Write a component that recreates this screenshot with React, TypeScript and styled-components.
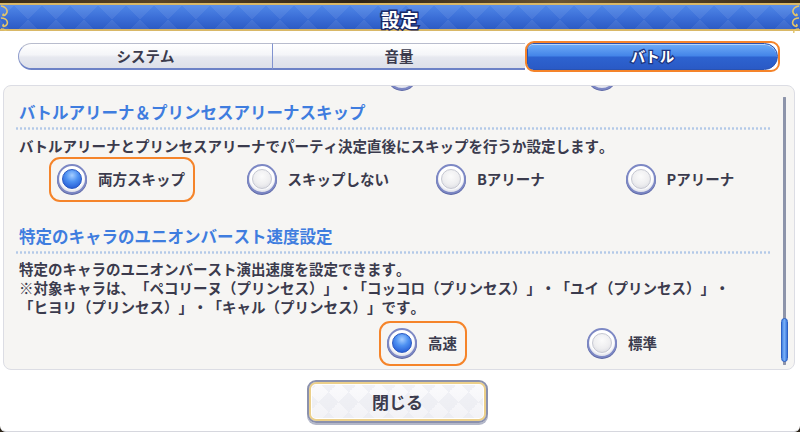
import React from "react";
import styled, { createGlobalStyle } from "styled-components";

const FONT = `"Noto Sans CJK JP", "Noto Sans", sans-serif`;

const Global = createGlobalStyle`
  html, body { margin: 0; padding: 0; width: 800px; height: 432px; overflow: hidden; background: #2b2418; }
  * { box-sizing: border-box; text-spacing-trim: space-all; font-kerning: none; }
  #root { width: 800px; height: 432px; }
`;

const Screen = styled.div`
  width: 800px;
  height: 432px;
  display: flex;
  flex-direction: column;
  font-family: ${FONT};
  color: #3b3b4d;
`;

const TopStrip = styled.div`
  height: 3px;
  flex-shrink: 0;
  background: linear-gradient(90deg, #3a2c18, #5a4424 20%, #2f2414 45%, #6a5430 70%, #3a2c18);
`;

const Header = styled.div`
  height: 28px;
  flex-shrink: 0;
  border-top: 2px solid #d9b867;
  border-bottom: 2px solid #d9b867;
  background:
    linear-gradient(45deg, rgba(255,255,255,0.07) 25%, transparent 25%, transparent 75%, rgba(255,255,255,0.07) 75%),
    linear-gradient(-45deg, rgba(255,255,255,0.07) 25%, transparent 25%, transparent 75%, rgba(255,255,255,0.07) 75%),
    linear-gradient(180deg, #5088e8 0%, #3a6dd6 55%, #2c5bc4 100%);
  background-size: 28px 28px, 28px 28px, 100% 100%;
  display: grid;
  grid-template-columns: 1fr auto 1fr;
  align-items: center;
`;

const Ornament = styled.svg<{ $side: "left" | "right" }>`
  justify-self: ${(p) => (p.$side === "left" ? "start" : "end")};
  transform: ${(p) => (p.$side === "right" ? "scaleX(-1)" : "none")};
  display: block;
`;

const Title = styled.div`
  font-size: 18.5px;
  font-weight: 700;
  line-height: 24px;
  color: #ffffff;
  -webkit-text-stroke: 3px #1b2a66;
  paint-order: stroke fill;
  letter-spacing: 0.5px;
`;

const Panel = styled.div`
  flex: 1;
  background: #ffffff;
  display: flex;
  flex-direction: column;
  border-radius: 0 0 6px 6px;
  border-bottom: 1px solid #d6d7de;
`;

const Tabs = styled.div`
  margin: 12px 22px 0 18px;
  height: 27px;
  display: grid;
  grid-template-columns: 254px 253px 1fr;
  flex-shrink: 0;
`;

type TabPos = "first" | "mid" | "last";

const Tab = styled.div<{ $active?: boolean; $pos: TabPos; $hl?: boolean }>`
  position: relative;
  display: flex;
  align-items: center;
  justify-content: center;
  font-size: 14.5px;
  font-weight: 700;
  line-height: 1;
  ${(p) =>
    p.$active
      ? `
    margin-left: 2px;
    color: #ffffff;
    -webkit-text-stroke: 2.5px #1d3580;
    paint-order: stroke fill;
    background: linear-gradient(180deg, #6fadf7 0%, #4384e8 48%, #2d63d0 52%, #2a5ac6 100%);
    border: 1px solid #2a52b0;
    border-radius: 6px 14px 14px 6px;
    box-shadow: inset 0 1px 0 rgba(255,255,255,0.5);
  `
      : `
    color: #3b3b4d;
    background: linear-gradient(180deg, #ffffff 0%, #f4f5f8 45%, #e6e8ef 55%, #dde0e9 100%);
    border-top: 1px solid #b8bccd;
    border-bottom: 2px solid #6d82c6;
    ${p.$pos === "first" ? "border-left: 1px solid #8e9ccc; border-radius: 14px 0 0 14px;" : "border-left: 1px solid #8193cf;"}
  `}
  ${(p) =>
    p.$hl
      ? `
    &::after {
      content: "";
      position: absolute;
      inset: -3px -3px -3px -3px;
      border: 2px solid #f5842a;
      border-radius: 9px;
      pointer-events: none;
    }
  `
      : ""}
`;

const Box = styled.div`
  margin: 15px 5px 0 3px;
  height: 285px;
  flex-shrink: 0;
  border: 1px solid #dcdde4;
  border-radius: 8px;
  background: #f6f5f3;
  display: flex;
  overflow: hidden;
`;

const Content = styled.div`
  flex: 1;
  overflow: hidden;
  padding: 0 10px 0 11px;
  display: flex;
  flex-direction: column;
`;

const SectionTitle = styled.div<{ $mt: number }>`
  margin-top: ${(p) => p.$mt}px;
  padding-left: 4px;
  font-size: 16.5px;
  line-height: 22px;
  font-weight: 700;
  color: #3f7ddf;
  white-space: nowrap;
`;

const Dotted = styled.div`
  margin-top: 4px;
  height: 3px;
  background-image: radial-gradient(circle, #b3c9e8 1px, transparent 1.4px);
  background-size: 4px 3px;
`;

const Desc = styled.div<{ $mt: number }>`
  margin-top: ${(p) => p.$mt}px;
  padding-left: 4px;
  font-size: 14.5px;
  line-height: 19px;
  font-weight: 700;
  color: #3b3b4d;
  white-space: nowrap;
`;

const RadioRow = styled.div<{ $mt: number; $pl: number; $col: number; $n: number }>`
  margin-top: ${(p) => p.$mt}px;
  padding-left: ${(p) => p.$pl}px;
  height: 30px;
  flex-shrink: 0;
  display: grid;
  grid-template-columns: repeat(${(p) => p.$n}, ${(p) => p.$col}px);
`;

const RadioItem = styled.div<{ $hl?: boolean }>`
  position: relative;
  display: flex;
  align-items: center;
  gap: 11px;
  justify-self: start;
  ${(p) =>
    p.$hl
      ? `
    &::after {
      content: "";
      position: absolute;
      inset: -7px -10px -8px -8px;
      border: 2px solid #f5842a;
      border-radius: 11px;
      pointer-events: none;
    }
  `
      : ""}
`;

const RadioOuter = styled.span`
  width: 30px;
  height: 30px;
  flex-shrink: 0;
  border-radius: 50%;
  background: #ffffff;
  border: 2px solid #7d88c4;
  box-shadow: 0 1px 0 #5c67a6, inset 0 -2px 2px rgba(60, 70, 120, 0.15);
  display: flex;
  align-items: center;
  justify-content: center;
`;

const RadioDot = styled.span<{ $on: boolean }>`
  width: 20px;
  height: 20px;
  border-radius: 50%;
  background: ${(p) =>
    p.$on
      ? "radial-gradient(circle at 50% 30%, #a6ceff 0%, #4f92f2 40%, #2a62d8 80%, #1f4fbf 100%)"
      : "radial-gradient(circle at 50% 35%, #fbfbfb 0%, #eeeef0 55%, #d4d5dc 100%)"};
  border: 1px solid ${(p) => (p.$on ? "#2a58c0" : "#c6c8d2")};
`;

const RadioLabel = styled.span`
  font-size: 14.5px;
  font-weight: 700;
  line-height: 20px;
  color: #3b3b4d;
  white-space: nowrap;
`;

const ScrollBar = styled.div`
  width: 7px;
  margin: 11px 6px 4px 0;
  display: flex;
  flex-direction: column;
  justify-content: flex-end;
  background: linear-gradient(90deg, transparent 1.5px, #8d94aa 1.5px, #8d94aa 5.5px, transparent 5.5px);
  border-radius: 3px;
`;

const Thumb = styled.div`
  height: 44px;
  margin-bottom: 3px;
  border-radius: 4px;
  background: linear-gradient(90deg, #3f7fe2 0%, #7cb2f8 45%, #3a76dc 100%);
  border: 1px solid #2f62c4;
`;

const Footer = styled.div`
  flex: 1;
  display: flex;
  justify-content: center;
  align-items: flex-start;
  padding: 10px 5px 0 0;
`;

const CloseButton = styled.button`
  width: 181px;
  height: 43px;
  border: 2px solid #8b91ad;
  border-radius: 9px;
  background:
    linear-gradient(45deg, rgba(226,228,236,0.4) 25%, transparent 25%, transparent 75%, rgba(226,228,236,0.4) 75%),
    linear-gradient(-45deg, rgba(226,228,236,0.4) 25%, transparent 25%, transparent 75%, rgba(226,228,236,0.4) 75%),
    linear-gradient(180deg, #fbfbfd 0%, #f2f2f6 100%);
  background-size: 20px 20px, 20px 20px, 100% 100%;
  box-shadow: inset 0 0 0 2px #ebcf8a, inset 0 0 0 3px #ffffff, 0 2px 0 #b3b7c8;
  font-family: ${FONT};
  font-size: 17px;
  font-weight: 700;
  color: #3b3b4d;
  display: flex;
  align-items: center;
  justify-content: center;
  padding: 0;
`;

function Radio({ label, on, hl }: { label?: string; on: boolean; hl?: boolean }) {
  return (
    <RadioItem $hl={hl}>
      <RadioOuter>
        <RadioDot $on={on} />
      </RadioOuter>
      {label ? <RadioLabel>{label}</RadioLabel> : null}
    </RadioItem>
  );
}

function Curl() {
  return (
    <>
      <path d="M1 1 C7 2 9 7 5 10 C3 11.5 2 9.5 4 9" stroke="#e3c46a" strokeWidth="1.6" fill="none" />
      <path d="M1 13 C8 13 9 19 5 21 C3 22 2 20 4 19.5" stroke="#e3c46a" strokeWidth="1.6" fill="none" />
      <path d="M1 24 C5 24 7 26 6 28" stroke="#e3c46a" strokeWidth="1.4" fill="none" />
    </>
  );
}

export default function App() {
  return (
    <Screen>
      <Global />
      <TopStrip />
      <Header>
        <Ornament $side="left" width="10" height="28" viewBox="0 0 10 28">
          <Curl />
        </Ornament>
        <Title>設定</Title>
        <Ornament $side="right" width="10" height="28" viewBox="0 0 10 28">
          <Curl />
        </Ornament>
      </Header>
      <Panel>
        <Tabs>
          <Tab $pos="first">システム</Tab>
          <Tab $pos="mid">音量</Tab>
          <Tab $pos="last" $active $hl>
            バトル
          </Tab>
        </Tabs>
        <Box>
          <Content>
            <RadioRow $mt={-26} $pl={372} $col={200} $n={2}>
              <Radio on={false} />
              <Radio on={false} />
            </RadioRow>
            <SectionTitle $mt={11}>バトルアリーナ＆プリンセスアリーナスキップ</SectionTitle>
            <Dotted />
            <Desc $mt={6}>バトルアリーナとプリンセスアリーナでパーティ決定直後にスキップを行うか設定します。</Desc>
            <RadioRow $mt={9} $pl={42} $col={189.5} $n={4}>
              <Radio label="両方スキップ" on hl />
              <Radio label="スキップしない" on={false} />
              <Radio label="Bアリーナ" on={false} />
              <Radio label="Pアリーナ" on={false} />
            </RadioRow>
            <SectionTitle $mt={31}>特定のキャラのユニオンバースト速度設定</SectionTitle>
            <Dotted />
            <Desc $mt={5}>
              特定のキャラのユニオンバースト演出速度を設定できます。
              <br />
              ※対象キャラは、「ペコリーヌ（プリンセス）」・「コッコロ（プリンセス）」・「ユイ（プリンセス）」・
              <br />
              「ヒヨリ（プリンセス）」・「キャル（プリンセス）」です。
            </Desc>
            <RadioRow $mt={12} $pl={372} $col={200} $n={2}>
              <Radio label="高速" on hl />
              <Radio label="標準" on={false} />
            </RadioRow>
          </Content>
          <ScrollBar>
            <Thumb />
          </ScrollBar>
        </Box>
        <Footer>
          <CloseButton>閉じる</CloseButton>
        </Footer>
      </Panel>
    </Screen>
  );
}
